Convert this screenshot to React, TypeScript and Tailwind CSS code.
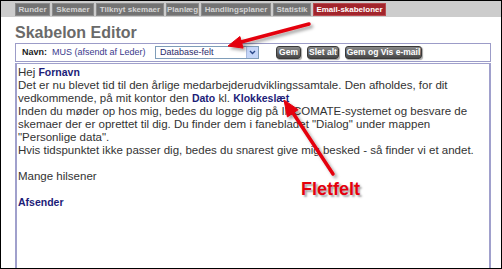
import React from "react";

const tabs = [
  { label: "Runder", w: "w-[35px]" },
  { label: "Skemaer", w: "w-[42px]" },
  { label: "Tilknyt skemaer", w: "w-[68px]" },
  { label: "Planlæg", w: "w-[33px]" },
  { label: "Handlingsplaner", w: "w-[70px]" },
  { label: "Statistik", w: "w-[38px]" },
];

function Btn({ children, w }: { children: React.ReactNode; w: string }) {
  return (
    <div
      className={`${w} h-[13px] rounded-[3px] border border-[#3a3a3a] bg-gradient-to-b from-[#8a8a8a] to-[#474747] text-white font-bold text-[8.5px] leading-[11px] text-center shadow-[1px_1px_1px_rgba(0,0,0,0.35)]`}
    >
      {children}
    </div>
  );
}

export default function App() {
  const B = "font-bold text-[10.5px] text-[#1c1c78]";
  return (
    <div
      className="relative w-[502px] h-[269px] border border-black bg-white overflow-hidden text-[#333]"
      style={{ fontFamily: '"Liberation Sans", Arial, sans-serif' }}
    >
      {/* tab bar */}
      <div className="h-[16px] bg-[#cccccc] flex gap-[2px] pl-[14px] pt-[2px]">
        {tabs.map((t) => (
          <div
            key={t.label}
            className={`${t.w} h-[13px] bg-[#737373] border border-[#8c8c8c] text-[#d4d4d4] text-[8px] font-bold leading-[11px] text-center whitespace-nowrap`}
          >
            {t.label}
          </div>
        ))}
        <div className="w-[73px] h-[13px] bg-[#a2252c] border border-[#b84a50] text-white text-[8px] font-bold leading-[11px] text-center whitespace-nowrap">
          Email-skabeloner
        </div>
      </div>

      <div className="pl-[14px] pt-[7px]">
        <div className="text-[16px] leading-[18px] font-bold text-[#6a6a6a]">Skabelon Editor</div>

        {/* Navn panel */}
        <div className="mt-[1px] w-[476px] h-[19px] border border-[#9c9cc8] flex items-center pl-[6px] text-[9px]">
          <span className="font-bold text-[#222] w-[30px]">Navn:</span>
          <span className="text-[#3a3a8c] w-[103px]">MUS (afsendt af Leder)</span>
          <div className="w-[104px] h-[13px] border border-[#7f9db9] bg-white flex items-center justify-between">
            <span className="pl-[4px] text-[#2a2a6a] text-[9px] leading-[11px]">Database-felt</span>
            <div className="w-[12px] h-[11px] bg-[#c5d6f8] border-l border-[#aabbe0] flex items-center justify-center">
              <svg width="7" height="5" viewBox="0 0 7 5">
                <path d="M1 1 L3.5 3.5 L6 1" stroke="#2b4a8a" strokeWidth="1.4" fill="none" />
              </svg>
            </div>
          </div>
          <div className="flex gap-[6px] ml-[17px]">
            <Btn w="w-[25px]">Gem</Btn>
            <Btn w="w-[32px]">Slet alt</Btn>
            <Btn w="w-[77px]">Gem og Vis e-mail</Btn>
          </div>
        </div>

        {/* body */}
        <div className="mt-[1px] w-[476px] h-[220px] border-t border-x-2 border-[#a0a0cc] pt-[2px] pl-[1px] text-[11.5px] leading-[13px] text-[#333] whitespace-nowrap">
          <div>
            Hej <span className={B}>Fornavn</span>
          </div>
          <div>Det er nu blevet tid til den årlige medarbejderudviklingssamtale. Den afholdes, for dit</div>
          <div>
            vedkommende, på mit kontor den <span className={B}>Dato</span> kl.{" "}
            <span className={B}>Klokkeslæt</span>
          </div>
          <div>Inden du møder op hos mig, bedes du logge dig på INCOMATE-systemet og besvare de</div>
          <div>skemaer der er oprettet til dig. Du finder dem i fanebladet "Dialog" under mappen</div>
          <div>"Personlige data".</div>
          <div>Hvis tidspunktet ikke passer dig, bedes du snarest give mig besked - så finder vi et andet.</div>
          <div>&nbsp;</div>
          <div>Mange hilsener</div>
          <div>&nbsp;</div>
          <div className={B}>Afsender</div>
        </div>
      </div>

      {/* annotation overlay */}
      <svg className="absolute left-[-1px] top-[-1px] pointer-events-none" width="502" height="269">
        <defs>
          <filter id="sh" x="-20%" y="-20%" width="140%" height="140%">
            <feDropShadow dx="2.5" dy="2.5" stdDeviation="1.5" floodColor="#000" floodOpacity="0.35" />
          </filter>
        </defs>
        <g filter="url(#sh)" fill="#e4000c" stroke="#e4000c">
          <line x1="309" y1="24" x2="241" y2="42" strokeWidth="3.5" strokeLinecap="round" />
          <polygon points="228,46 243.1,48.1 239.9,36.5" strokeWidth="1" />
          <line x1="333" y1="174" x2="293" y2="113" strokeWidth="3.5" strokeLinecap="round" />
          <polygon points="284,100 298.2,109.7 287.4,116.9" strokeWidth="1" />
        </g>
      </svg>
      <div className="absolute left-[300px] top-[179px] text-[18px] leading-[18px] font-bold text-[#e4000c] [text-shadow:2px_2px_2px_rgba(0,0,0,0.35)]">
        Fletfelt
      </div>
    </div>
  );
}
